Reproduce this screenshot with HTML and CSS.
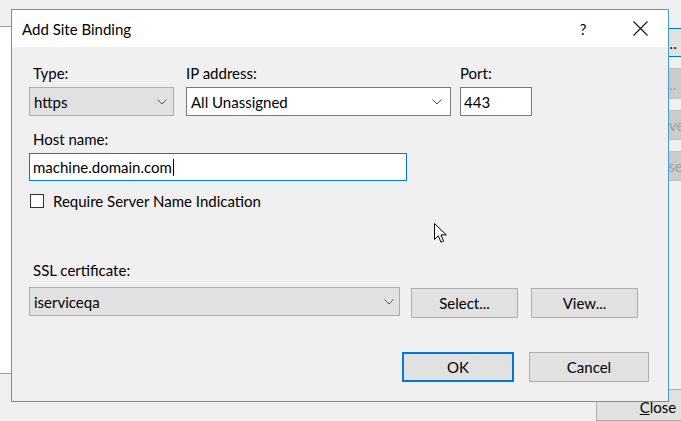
FILE: index.html
```html
<!DOCTYPE html>
<html>
<head>
<meta charset="utf-8">
<link rel="stylesheet" href="styles.css">
</head>
<body>
<div class="desktop">
  <div class="list"></div>
  <div class="side">
    <div class="sbtn default">Add...</div>
    <div class="sbtn disabled">Edit...</div>
    <div class="sbtn disabled">Remove</div>
    <div class="sbtn disabled">Browse</div>
    <div class="sbtn close-btn"><span class="u">C</span>lose</div>
  </div>

  <div class="dialog">
    <div class="titlebar">
      <div class="title">Add Site Binding</div>
      <div class="tbtn help">?</div>
      <div class="tbtn">
        <svg width="15" height="15" viewBox="0 0 15 15"><path d="M0.5 0.5 L14.5 14.5 M14.5 0.5 L0.5 14.5" stroke="#111" stroke-width="1.1" fill="none"/></svg>
      </div>
    </div>
    <div class="content">
      <div class="row1">
        <div class="field f-type">
          <div class="label">Type:</div>
          <div class="combo gray type"><span>https</span>
            <svg class="chev" width="10" height="6" viewBox="0 0 10 6"><polyline points="0.5,0.5 5,5 9.5,0.5" fill="none" stroke="#555" stroke-width="1"/></svg>
          </div>
        </div>
        <div class="field f-ip">
          <div class="label">IP address:</div>
          <div class="combo white"><span>All Unassigned</span>
            <svg class="chev" width="10" height="6" viewBox="0 0 10 6"><polyline points="0.5,0.5 5,5 9.5,0.5" fill="none" stroke="#555" stroke-width="1"/></svg>
          </div>
        </div>
        <div class="field f-port">
          <div class="label">Port:</div>
          <div class="input">443</div>
        </div>
      </div>

      <div class="label host-label">Host name:</div>
      <div class="input host focus"><span>machine.domain.com</span><span class="caret"></span></div>

      <div class="check-row">
        <span class="checkbox"></span>
        <span class="check-label">Require Server Name Indication</span>
      </div>

      <div class="label ssl-label">SSL certificate:</div>
      <div class="ssl-row">
        <div class="combo gray ssl"><span>iserviceqa</span>
          <svg class="chev" width="10" height="6" viewBox="0 0 10 6"><polyline points="0.5,0.5 5,5 9.5,0.5" fill="none" stroke="#555" stroke-width="1"/></svg>
        </div>
        <div class="btn b-select">Select...</div>
        <div class="btn b-view">View...</div>
      </div>

      <div class="footer">
        <div class="btn b-ok">OK</div>
        <div class="btn b-cancel">Cancel</div>
      </div>
    </div>
  </div>

  <svg class="cursor" width="14" height="21" viewBox="0 0 14 21">
    <path d="M0.5 0.5 L0.5 16.5 L4.3 12.8 L7 19.2 L9.6 18.1 L7 11.9 L12.3 11.9 Z" fill="#fff" stroke="#000" stroke-width="1" stroke-linejoin="miter"/>
  </svg>
</div>
</body>
</html>
```

FILE: styles.css
```css
* { box-sizing: border-box; }

body {
  margin: 0;
  font-family: Lato, "Noto Sans", sans-serif;
  font-size: 15px;
  color: #000;
}

.desktop {
  position: relative;
  width: 681px;
  height: 421px;
  overflow: hidden;
  background: #f0f0f0;
  display: flex;
}

.list {
  flex: none;
  width: 585px;
  height: 348px;
  margin-top: 26px;
  background: #fff;
  border-top: 1px solid #a0a0a0;
  border-bottom: 1px solid #a0a0a0;
}

.side {
  flex: none;
  width: 124px;
  margin-left: 11px;
  padding-top: 28px;
  display: flex;
  flex-direction: column;
}

.sbtn {
  height: 31px;
  margin-top: 11px;
  display: flex;
  align-items: center;
  justify-content: center;
  background: #e1e1e1;
  border: 1px solid #adadad;
}

.sbtn.default {
  height: 30px;
  margin-top: 0;
  border: 1px solid #0078d7;
  background: #e1e1e1;
}

.sbtn.disabled {
  background: #cccccc;
  border-color: #bfbfbf;
  color: #a0a0a0;
}

.sbtn.close-btn {
  margin-top: 208px;
  height: 32px;
  align-items: flex-start;
  padding-top: 8px;
}

.u { text-decoration: underline; }

.dialog {
  position: absolute;
  left: 11px;
  top: 9px;
  width: 658px;
  height: 393px;
  border: 1px solid #4a98dd;
  background: #f0f0f0;
  display: flex;
  flex-direction: column;
}

.titlebar {
  height: 37px;
  flex: none;
  background: #fff;
  display: flex;
  align-items: center;
  padding-left: 10px;
  padding-right: 5px;
}

.title { flex: 1; }

.tbtn {
  width: 46px;
  height: 37px;
  display: flex;
  align-items: center;
  justify-content: center;
}

.help { margin-right: 11px; }

.content {
  flex: 1;
  padding: 18px 19px 0 17px;
  display: flex;
  flex-direction: column;
}

.label {
  line-height: 17px;
  height: 17px;
  padding-left: 4px;
}

.row1 {
  display: flex;
}

.field {
  display: flex;
  flex-direction: column;
  gap: 5px;
}

.f-type { width: 145px; }
.f-ip { width: 265px; margin-left: 12px; }
.f-ip .label { padding-left: 0; }
.f-port { width: 72px; margin-left: 9px; }
.f-port .label { padding-left: 0; }

.combo {
  height: 29px;
  display: flex;
  align-items: center;
  justify-content: space-between;
  padding: 0 9px 0 4px;
  border: 1px solid #adadad;
}

.combo.gray { background: #e1e1e1; }
.combo.type { padding-right: 6px; }
.combo.white { background: #fff; border-color: #7a7a7a; padding-right: 8px; }

.chev { flex: none; margin-top: 1px; }

.input {
  height: 29px;
  display: flex;
  align-items: center;
  padding-left: 3px;
  background: #fff;
  border: 1px solid #7a7a7a;
}

.host-label { margin-top: 15px; }

.host {
  width: 378px;
  height: 28px;
  margin-top: 5px;
}

.focus { border-color: #0078d7; }

.caret {
  display: inline-block;
  width: 1px;
  height: 17px;
  background: #000;
  margin-left: 1px;
}

.check-row {
  display: flex;
  align-items: center;
  margin-top: 11px;
  height: 17px;
}

.checkbox {
  width: 14px;
  height: 14px;
  margin-left: 1px;
  border: 1px solid #333;
  background: #fff;
  flex: none;
}

.check-label { margin-left: 9px; }

.ssl-label { margin-top: 53px; }

.ssl-row {
  display: flex;
  align-items: flex-start;
  margin-top: 8px;
}

.ssl { width: 371px; height: 29px; padding-right: 5px; }

.btn {
  height: 30px;
  display: flex;
  align-items: center;
  justify-content: center;
  background: #e1e1e1;
  border: 1px solid #adadad;
}

.b-select { width: 107px; margin-left: 11px; margin-top: 1px; }
.b-view { width: 107px; margin-left: 13px; margin-top: 1px; }

.footer {
  display: flex;
  justify-content: flex-end;
  margin-top: 34px;
}

.b-ok {
  width: 112px;
  border: 2px solid #0078d7;
}

.b-cancel {
  width: 120px;
  margin-left: 15px;
}

.cursor {
  position: absolute;
  left: 434px;
  top: 223px;
}
```
